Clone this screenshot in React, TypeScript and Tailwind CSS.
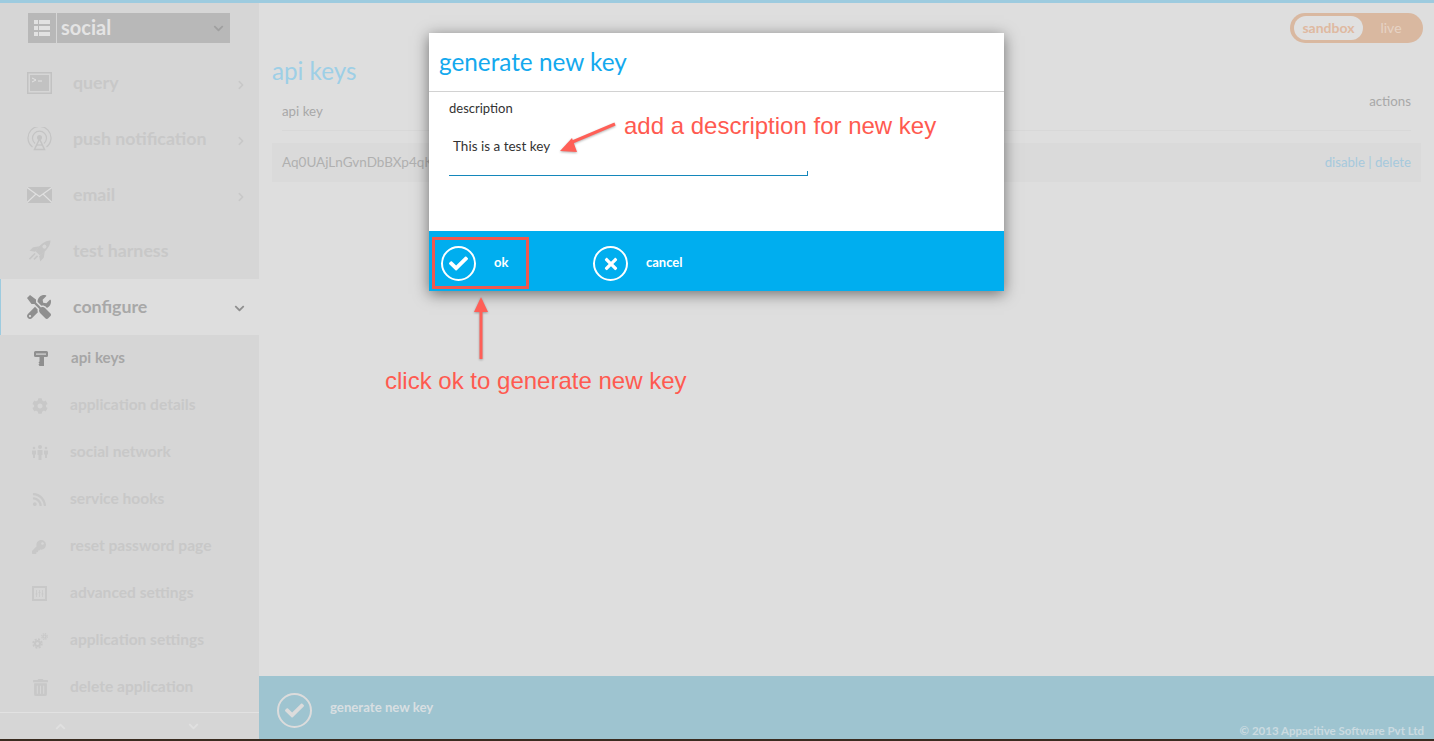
import React from "react";
import { FaTools, FaCog, FaRss, FaKey, FaTrashAlt, FaChevronRight, FaChevronDown, FaChevronUp, FaCheck, FaTimes } from "react-icons/fa";

const TerminalIcon = () => (
  <svg width="25" height="22" viewBox="0 0 25 22">
    <path fillRule="evenodd" d="M0 0h25v22H0zM1.500 1.500v19h22v-19z" fill="#c2c2c2" />
    <rect x="3" y="3" width="19" height="16" fill="#c2c2c2" />
    <path d="M5 6l4 2-4 2M11 9h4" stroke="#e3e3e3" strokeWidth="1" fill="none" />
  </svg>
);
const TowerIcon = () => (
  <svg width="25" height="24" viewBox="0 0 25 24" fill="none" stroke="#c4c4c4">
    <path d="M5.500 20A11.500 11.500 0 1 1 19.500 20" strokeWidth="1.200" />
    <path d="M8 16.500A7 7 0 1 1 17 16.500" strokeWidth="1.200" />
    <circle cx="12.500" cy="10.500" r="2.500" fill="#c4c4c4" stroke="none" />
    <path d="M12.500 12L7.500 22.500H17.500Z" strokeWidth="1.500" />
    <path d="M10 18h5" strokeWidth="1.200" />
  </svg>
);
const MailIcon = () => (
  <svg width="25" height="16" viewBox="0 0 25 16">
    <rect width="25" height="16" fill="#c2c2c2" />
    <path d="M0 .5L12.500 9.500 25 .5M0 15.500L9 7M25 15.500L16 7" stroke="#e0e0e0" strokeWidth="1.100" fill="none" />
  </svg>
);
const RocketIcon = () => (
  <svg width="25" height="25" viewBox="0 0 25 25">
    <g transform="rotate(45 12.500 12.500)" fill="#c6c6c6">
      <path fillRule="evenodd" d="M12.500-3C16.500 1 17 8 15.500 15h-6C8 8 8.500 1 12.500-3zM12.500 3.500a2 2 0 1 0 0 4 2 2 0 0 0 0-4z" />
      <path d="M9 8.500L5 14v5l4.500-3zM16 8.500l4 5.500v5l-4.500-3z" />
      <path d="M10 17h1.600v8H10zM13.400 17H15v5h-1.600z" />
    </g>
  </svg>
);
const PeopleIcon = () => (
  <svg width="16" height="15" viewBox="0 0 16 15" fill="#c8c8c8">
    <circle cx="8" cy="2" r="2" /><path d="M5.500 5h5v5h-1v5h-3v-5h-1z" />
    <circle cx="2" cy="3" r="1.300" /><path d="M0 5.500h4v4H3v3.500H1V9.500H0z" />
    <circle cx="14" cy="3" r="1.300" /><path d="M12 5.500h4v4h-1v3.500h-2V9.500h-1z" />
  </svg>
);
const ApiKeyIcon = () => (
  <svg width="14" height="15" viewBox="0 0 14 15">
    <path fill="#8f8f8f" d="M1.500 0h11A1.500 1.500 0 0 1 14 1.500v3A1.500 1.500 0 0 1 12.500 6H10v9H5.500l-1-1.500 1-1-1-1 1-1V6h-4A1.500 1.500 0 0 1 0 4.500v-3A1.500 1.500 0 0 1 1.500 0z" />
    <rect x="2" y="2.500" width="10" height="1.200" fill="#d6d6d6" />
  </svg>
);
const SlidersIcon = () => (
  <svg width="15" height="15" viewBox="0 0 15 15">
    <path fillRule="evenodd" d="M0 0h15v15H0zM2 2v11h11V2z" fill="#c8c8c8" />
    <path d="M4.500 4v7M7.500 4v7M10.500 4v7M3.500 8h2M6.500 6.500h2M9.500 8h2" stroke="#c8c8c8" strokeWidth=".8" />
  </svg>
);
const CogsIcon = () => (
  <svg width="16" height="16" viewBox="0 0 16 16" fill="none" stroke="#c8c8c8">
    <circle cx="5.500" cy="10.500" r="2.500" strokeWidth="2" />
    <circle cx="5.500" cy="10.500" r="4.400" strokeWidth="1.600" strokeDasharray="2 1.460" />
    <circle cx="12.500" cy="3.500" r="1.500" strokeWidth="1.200" />
    <circle cx="12.500" cy="3.500" r="2.800" strokeWidth="1.200" strokeDasharray="1.300 .9" />
  </svg>
);
const GridIcon = () => (
  <svg width="16" height="16" viewBox="0 0 16 16" fill="#e2e2e2">
    <path d="M0 0h4v4H0zM5 0h11v4H5zM0 6h4v4H0zM5 6h11v4H5zM0 12h4v4H0zM5 12h11v4H5z" />
  </svg>
);
const CircleIcon = ({ kind, color }: { kind: "check" | "x"; color: string }) => (
  <span className="mt-[5px] flex h-[35px] w-[35px] shrink-0 items-center justify-center rounded-full border-2" style={{ borderColor: color, color }}>
    {kind === "check" ? <FaCheck size={19} /> : <FaTimes size={18} />}
  </span>
);

const mainItems = [
  { label: "query", icon: <TerminalIcon />, arrow: true },
  { label: "push notification", icon: <TowerIcon />, arrow: true },
  { label: "email", icon: <MailIcon />, arrow: true },
  { label: "test harness", icon: <RocketIcon />, arrow: false },
];
const subItems = [
  { label: "application details", icon: <FaCog size={16} color="#c8c8c8" /> },
  { label: "social network", icon: <PeopleIcon /> },
  { label: "service hooks", icon: <FaRss size={15} color="#c8c8c8" /> },
  { label: "reset password page", icon: <FaKey size={14} color="#c8c8c8" /> },
  { label: "advanced settings", icon: <SlidersIcon /> },
  { label: "application settings", icon: <CogsIcon /> },
  { label: "delete application", icon: <FaTrashAlt size={17} color="#c8c8c8" /> },
];

export default function App() {
  return (
    <div className="relative flex h-[741px] w-[1434px] flex-col overflow-hidden bg-[#dedede] font-['Lato','Open_Sans',sans-serif]">
      <div className="h-[3px] shrink-0 bg-[#9dcbdf]" />
      <div className="flex min-h-0 flex-1">
        <aside className="flex w-[259px] shrink-0 flex-col bg-[#d6d6d6]">
          <div className="flex h-[52px] shrink-0 items-start pl-[28px] pt-[10px]">
            <div className="flex h-[30px] w-[28px] items-center justify-center bg-[#b8b8b8]">
              <GridIcon />
            </div>
            <div className="ml-[1px] flex h-[30px] w-[173px] items-center justify-between bg-[#b8b8b8] pl-[4px] pr-[6px]">
              <span className="pb-[2px] text-[20px] leading-none font-bold text-[#e4e4e4]">social</span>
              <FaChevronDown size={11} color="#a0a0a0" />
            </div>
          </div>
          {mainItems.map((m) => (
            <div key={m.label} className="flex h-[56px] shrink-0 items-center">
              <span className="flex w-[73px] shrink-0 justify-start pl-[27px]">{m.icon}</span>
              <span className="flex-1 pb-[2px] text-[17.750px] font-bold text-[#c8c8c8]">{m.label}</span>
              {m.arrow && <span className="mt-[4px] pr-[13px]"><FaChevronRight size={10} color="#c8c8c8" /></span>}
            </div>
          ))}
          <div className="flex h-[56px] shrink-0 items-center border-l border-[#9dcbdf] bg-[#dedede]">
            <span className="flex w-[72px] shrink-0 pl-[26px]"><FaTools size={24} color="#8f8f8f" /></span>
            <span className="flex-1 pb-[2px] text-[17.750px] font-bold text-[#a8a8a8]">configure</span>
            <span className="mt-[3px] pr-[14px]"><FaChevronDown size={11} color="#8f8f8f" /></span>
          </div>
          <div className="flex h-[47px] shrink-0 items-center">
            <span className="flex w-[71px] shrink-0 pl-[34px]"><ApiKeyIcon /></span>
            <span className="pb-[2px] text-[15.200px] font-bold text-[#a6a6a6]">api keys</span>
          </div>
          {subItems.map((s) => (
            <div key={s.label} className="flex h-[47px] shrink-0 items-center">
              <span className="flex w-[70px] shrink-0 pl-[32px]">{s.icon}</span>
              <span className="pb-[2px] text-[15.550px] font-bold text-[#c8c8c8]">{s.label}</span>
            </div>
          ))}
          <div className="mt-[1px] flex flex-1 items-center justify-between border-t border-[#e2e2e2] pl-[55px] pr-[60px]">
            <FaChevronUp size={11} color="#e0e0e0" />
            <FaChevronDown size={11} color="#e0e0e0" />
          </div>
        </aside>
        <main className="flex min-w-0 flex-1 flex-col">
          <div className="flex h-[30px] shrink-0 justify-end pr-[11px] pt-[10px]">
            <div className="flex h-[30px] w-[133px] items-center rounded-full bg-[#d9b8a0] pl-[4px]">
              <span className="flex h-[24px] w-[69px] items-center justify-center rounded-full bg-[#e0e0e0] pb-[2px] text-[14px] font-bold text-[#dfb9a0]">sandbox</span>
              <span className="flex-1 pb-[2px] pr-[4px] text-center text-[14px] text-[#e6d3c5]">live</span>
            </div>
          </div>
          <div className="flex-1 pl-[13px] pr-[13px] pt-[21px]">
            <h1 className="text-[24.200px] leading-[34px] text-[#9dcfe6]">api keys</h1>
            <div className="ml-[10px] mr-[10px] flex h-[43px] items-start justify-between border-b border-[#d8d8d8] text-[13.300px] leading-[20px] text-[#a8a8a8]">
              <span className="mt-[13px]">api key</span>
              <span className="mt-[3px]">actions</span>
            </div>
            <div className="mt-[12px] flex h-[39px] items-center justify-between bg-[#dadada] pl-[10px] pr-[10px] text-[13.500px] text-[#b0b0b0]">
              <span>Aq0UAjLnGvnDbBXp4qK</span>
              <span className="text-[13.200px] text-[#a6c9dd]">disable | delete</span>
            </div>
          </div>
          <div className="relative flex h-[63px] shrink-0 items-center bg-[#9ec4d0] pl-[18px]">
            <CircleIcon kind="check" color="#dcdcdc" />
            <span className="ml-[18px] text-[13.200px] font-bold text-[#d8dfe2]">generate new key</span>
            <span className="absolute bottom-0 right-[10px] text-[11.500px] font-bold text-[#cbdbe1]">© 2013 Appacitive Software Pvt Ltd</span>
          </div>
        </main>
      </div>
      <div className="h-[2px] shrink-0 bg-[#3a2c20]" />

      <div className="absolute left-[429px] top-[33px] flex h-[258px] w-[575px] flex-col bg-white shadow-[0_3px_14px_rgba(0,0,0,0.5)]">
        <div className="flex h-[59px] shrink-0 items-center border-b border-[#d2d2d2] pl-[10px]">
          <h2 className="text-[24.300px] text-[#14a9ee]">generate new key</h2>
        </div>
        <div className="flex-1 px-[20px] pt-[7px]">
          <div className="text-[13px] leading-[18px] text-[#333]">description</div>
          <div className="relative mt-[18px] flex h-[41px] w-[359px] items-start border-b border-[#1487bb] pl-[4px] pt-[1px] text-[13.500px] leading-[20px] text-[#333]">
            This is a test key
            <span className="absolute bottom-0 right-0 h-[4px] w-[1px] bg-[#1487bb]" />
          </div>
        </div>
        <div className="flex h-[60px] shrink-0 items-center bg-[#00aeef] pl-[12px] text-[13px] font-bold text-white">
          <CircleIcon kind="check" color="#ffffff" />
          <span className="ml-[18px] mt-[3px] w-[99px]">ok</span>
          <CircleIcon kind="x" color="#ffffff" />
          <span className="ml-[18px] mt-[3px]">cancel</span>
        </div>
      </div>

      <div className="absolute left-[432px] top-[237px] h-[52px] w-[97px] border-[3px] border-[#f0584f]" />
      <span className="absolute left-[624px] top-[112px] font-['Liberation_Sans',sans-serif] text-[24px] leading-[28px] text-[#ff5a50]">add a description for new key</span>
      <span className="absolute left-[385px] top-[367px] font-['Liberation_Sans',sans-serif] text-[24px] leading-[28px] text-[#ff5a50]">click ok to generate new key</span>
      <svg className="absolute left-[550px] top-[115px] drop-shadow-[0_1px_1px_rgba(0,0,0,0.3)]" width="70" height="45" viewBox="0 0 70 45">
        <path d="M65 9L20 28" stroke="#ff5f57" strokeWidth="3" />
        <path d="M10 36L22 23L27 37Z" fill="#ff5f57" />
      </svg>
      <svg className="absolute left-[470px] top-[295px] drop-shadow-[0_1px_1px_rgba(0,0,0,0.3)]" width="22" height="68" viewBox="0 0 22 68">
        <path d="M11 14V64" stroke="#ff5f57" strokeWidth="3" />
        <path d="M11 2L4 17H18Z" fill="#ff5f57" />
      </svg>
    </div>
  );
}
